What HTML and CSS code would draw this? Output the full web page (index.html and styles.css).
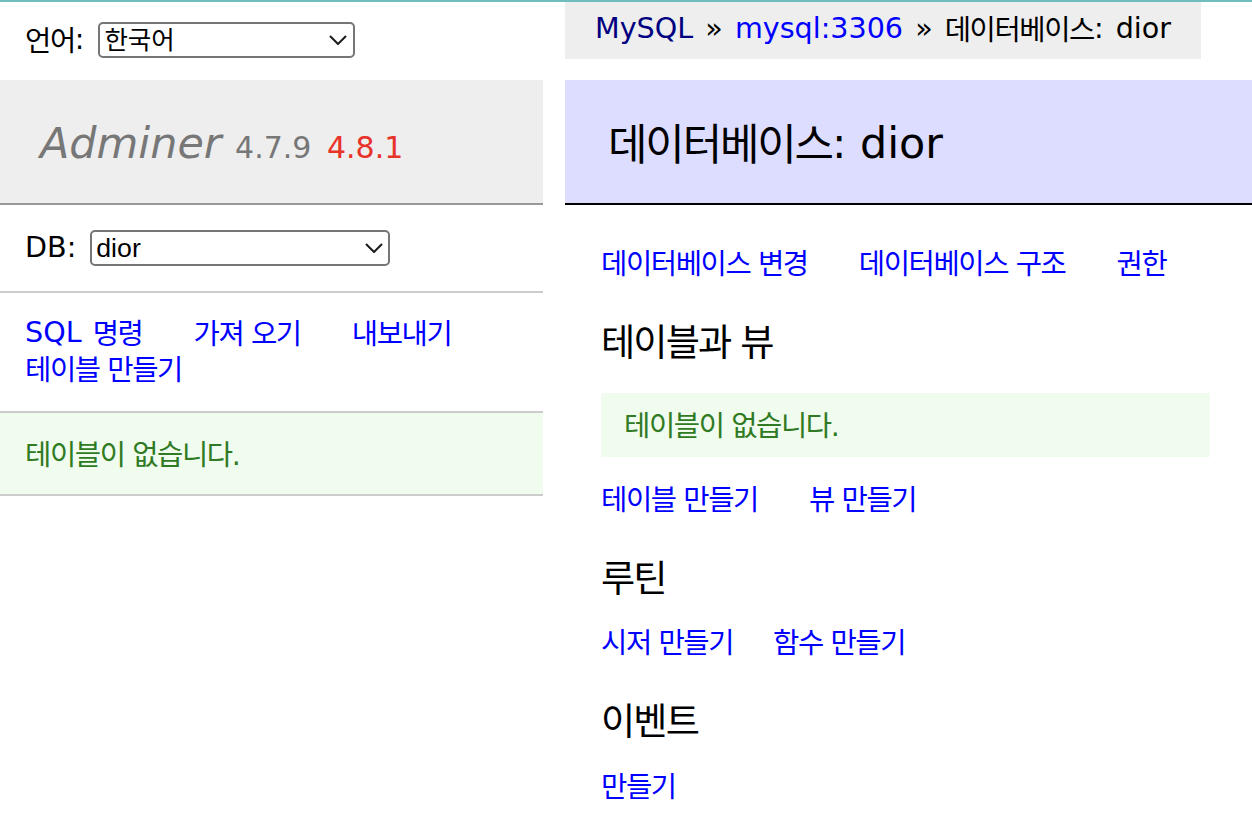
FILE: index.html
```html
<!DOCTYPE html>
<html lang="ko">
<head>
<meta charset="utf-8">
<title>데이터베이스: dior - Adminer</title>
<link rel="stylesheet" href="styles.css">
</head>
<body>
<div class="topline"></div>
<div class="page">
  <form class="lang">
    <label class="field-label"><span class="ko">언어</span>:</label>
    <span class="select-wrap">
      <select class="select select-lang"><option>한국어</option></select>
      <svg class="chev" viewBox="0 0 18 10" width="18" height="10"><polyline points="1,1 9,9 17,1" fill="none" stroke="#1a1a1a" stroke-width="2"/></svg>
    </span>
  </form>
  <div class="crumb-row">
    <p class="breadcrumb"><a class="visited" href="#">MySQL</a> » <a href="#">mysql:3306</a> » <span class="ko">데이터베이스</span>: dior</p>
  </div>

  <div class="menu">
    <h1><a class="logo" href="#">Adminer</a> <span class="version">4.7.9 <a class="newver" href="#">4.8.1</a></span></h1>
    <form class="dbrow">
      <label class="field-label field-db">DB:</label>
      <span class="select-wrap">
        <select class="select select-db"><option>dior</option></select>
        <svg class="chev chev-db" viewBox="0 0 18 10" width="18" height="10"><polyline points="1,1 9,9 17,1" fill="none" stroke="#1a1a1a" stroke-width="2"/></svg>
      </span>
    </form>
    <p class="menu-links links"><a href="#">SQL <span class="ko">명령</span></a> <a href="#"><span class="ko">가져 오기</span></a> <a href="#"><span class="ko">내보내기</span></a> <a href="#"><span class="ko">테이블 만들기</span></a></p>
    <p class="menu-msg"><span class="ko">테이블이 없습니다.</span></p>
  </div>

  <div class="content">
    <h2><span class="ko">데이터베이스</span>: dior</h2>
    <p class="links"><a href="#"><span class="ko">데이터베이스 변경</span></a> <a href="#"><span class="ko">데이터베이스 구조</span></a> <a href="#"><span class="ko">권한</span></a></p>
    <h3><span class="ko">테이블과 뷰</span></h3>
    <p class="message"><span class="ko">테이블이 없습니다.</span></p>
    <p class="links after"><a href="#"><span class="ko">테이블 만들기</span></a> <a href="#"><span class="ko">뷰 만들기</span></a></p>
    <h3><span class="ko">루틴</span></h3>
    <p class="links after"><a href="#"><span class="ko">시저 만들기</span></a><a href="#"><span class="ko">함수 만들기</span></a></p>
    <h3><span class="ko">이벤트</span></h3>
    <p class="links after"><a href="#"><span class="ko">만들기</span></a></p>
  </div>
</div>
</body>
</html>
```

FILE: styles.css
```css
* { box-sizing: border-box; }
html, body { margin: 0; padding: 0; }
body {
  font-family: "DejaVu Sans", "Noto Sans CJK KR", sans-serif;
  font-size: 28.6px;
  line-height: 35.75px;
  color: #000;
  background: #fff;
}
a { color: #00f; text-decoration: none; }
.ko {
  font-family: "DejaVu Sans", "Noto Sans CJK KR", sans-serif;
  font-size: 1em;
  letter-spacing: -0.05em;
  word-spacing: 0;
  line-height: 1;
  vertical-align: -2px;
}
.topline { height: 2px; background: #6fbdbd; }

.page {
  display: grid;
  grid-template-columns: 543px 1fr;
  grid-template-rows: 78px auto;
  column-gap: 22px;
}

/* language + db selects */
.lang {
  display: flex;
  align-items: center;
  margin: 0;
  padding: 0 0 3px 25px;
}
.field-label { margin-right: 14px; }
.field-db { margin-right: 14px; }
.select-wrap { position: relative; display: inline-block; line-height: 0; }
.select {
  -webkit-appearance: none;
  appearance: none;
  margin: 0;
  height: 36px;
  border: 2px solid #767676;
  border-radius: 5px;
  background: #fff;
  color: #000;
  font-family: "Liberation Sans", "Noto Sans CJK KR", sans-serif;
  font-size: 26.7px;
  line-height: 30px;
  padding: 0 30px 0 4px;
}
.select-lang { width: 257px; font-size: 25.5px; }
.select-db { width: 300px; }
.chev {
  position: absolute;
  right: 8px;
  top: 13px;
  width: 18px;
  height: 10px;
  pointer-events: none;
}
.chev-db { right: 7px; }

/* breadcrumb */
.crumb-row { align-self: start; }
.breadcrumb {
  display: inline-block;
  margin: 0;
  height: 57px;
  line-height: 52px;
  padding: 0 30px 0 30px;
  background: #eee;
  white-space: nowrap;
  word-spacing: 3px;
}
.breadcrumb .visited { color: #000080; }

/* left menu */
.menu h1 {
  margin: 0;
  height: 125px;
  padding: 37px 0 0 40px;
  font-size: 42.9px;
  line-height: 53.6px;
  font-weight: normal;
  font-style: italic;
  background: #eee;
  border-bottom: 2px solid #999;
  white-space: nowrap;
}
.logo { color: #777; }
.version { font-size: 30px; font-style: normal; color: #777; }
.newver { color: #e8332a; margin-left: 6px; }

.dbrow {
  margin: 0;
  height: 88px;
  display: flex;
  align-items: center;
  padding: 0 0 0 25px;
  border-bottom: 2px solid #ccc;
}
.menu-links {
  margin: 0;
  padding: 22px 28px 24px 25px;
  border-bottom: 2px solid #ccc;
}
.menu-msg {
  margin: 0;
  padding: 23px 28px 23px 25px;
  background: #effcee;
  color: #2f7a22;
  border-bottom: 2px solid #ccc;
}

/* content */
.content { padding-left: 36px; }
.content h2 {
  margin: 0 0 40px -36px;
  height: 125px;
  padding: 37px 0 0 43px;
  font-size: 42.9px;
  line-height: 53.6px;
  font-weight: normal;
  background: #ddf;
  border-bottom: 2px solid #000;
}
.links { margin: 0; word-spacing: 2px; }
.links a { white-space: nowrap; margin-right: 40px; }
.content h3 {
  font-weight: normal;
  font-size: 37.2px;
  line-height: 46.5px;
  margin: 37px 0 0;
}
.message {
  margin: 28.5px 42px 0 0;
  padding: 14.3px 23px;
  background: #effcee;
  color: #2f7a22;
}
.after { margin-top: 24px; }
```
